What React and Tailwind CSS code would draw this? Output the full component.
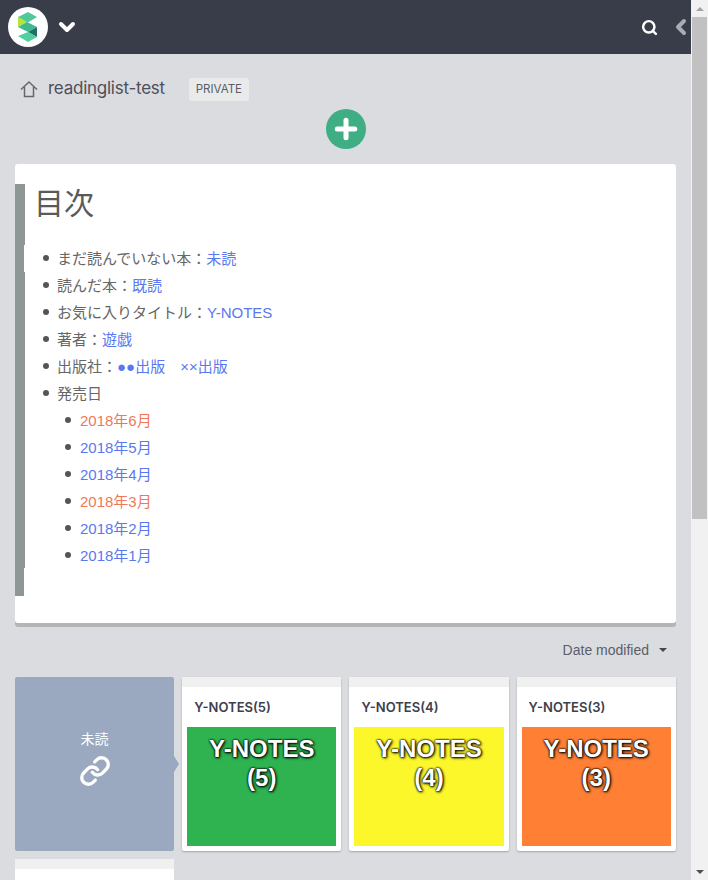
import { Link, Search, ChevronDown, ChevronLeft, Plus } from "lucide-react";

const TOC = [
  { label: "まだ読んでいない本", links: ["未読"] },
  { label: "読んだ本", links: ["既読"] },
  { label: "お気に入りタイトル", links: ["Y-NOTES"] },
  { label: "著者", links: ["遊戯"] },
  { label: "出版社", links: ["●●出版", "××出版"] },
];

const DATES = [
  { label: "2018年6月", missing: true },
  { label: "2018年5月" },
  { label: "2018年4月" },
  { label: "2018年3月", missing: true },
  { label: "2018年2月" },
  { label: "2018年1月" },
];

const NOTES = [
  { n: 5, color: "bg-[#2eb350]" },
  { n: 4, color: "bg-[#fbf72a]" },
  { n: 3, color: "bg-[#ff7f35]" },
];

const Logo = () => (
  <div className="w-10 h-10 rounded-full bg-white">
    <svg width="40" height="40" viewBox="8 7 40 40">
      <polygon points="18,17 28,12 37,17 27,23" fill="#4fc99a" />
      <polygon points="18,17 27,22 18,27" fill="#b5e53a" />
      <polygon points="18,27 27,22 37,27 28,32" fill="#3fb98f" />
      <polygon points="28,32 37,27 37,37" fill="#1f6f6a" />
      <polygon points="18,36 28,32 37,37 28,42" fill="#4fd0a0" />
    </svg>
  </div>
);

const Header = () => (
  <header className="h-[54px] bg-[#393d4a] flex items-center pl-2 -mr-[2px]">
    <Logo />
    <ChevronDown size={24} strokeWidth={4} className="ml-[7px] text-white" />
    <Search size={17} strokeWidth={3.5} className="ml-auto text-white" />
    <ChevronLeft size={24} strokeWidth={4} className="ml-[11px] text-[#a9acb4]" />
  </header>
);

const TitleRow = () => (
  <div className="flex items-center h-[24px] mt-[23px] pl-5">
    <svg width="18" height="18" viewBox="20 80 18 18" fill="none" stroke="#66676e" strokeWidth="1.5">
      <path d="M21 89.5 29 82l8 7.5" />
      <path d="M24.5 87v9.5h9V87" />
    </svg>
    <span className="ml-[10px] -mt-[1px] text-[17px] tracking-[-0.25px] text-[#4d4f59] font-['Inter',sans-serif]">readinglist-test</span>
    <span className="ml-6 h-[23px] w-[60px] pt-[2px] flex items-center justify-center rounded-[3px] bg-[#e9ebeb] text-[11.5px] text-[#5a5c66] font-['Inter',sans-serif]">
      PRIVATE
    </span>
  </div>
);

const TocList = () => (
  <ul className="mt-[22px] pl-[21px] text-[15px] leading-[27px]">
    {TOC.map((row) => (
      <li key={row.label} className="relative before:absolute before:left-[-14px] before:top-[10px] before:w-[6px] before:h-[6px] before:rounded-full before:bg-[#555]">
        {row.label}
        <span className="leading-none font-['Noto_Sans_CJK_TC']">：</span>
        {row.links.map((l, i) => (
          <a key={l} className="text-[#5a78f0]">
            {i > 0 && "　"}
            {l}
          </a>
        ))}
      </li>
    ))}
    <li className="relative before:absolute before:left-[-14px] before:top-[10px] before:w-[6px] before:h-[6px] before:rounded-full before:bg-[#555]">
      発売日
      <ul className="pl-[23px]">
        {DATES.map((d) => (
          <li
            key={d.label}
            className={`relative before:absolute before:left-[-15px] before:top-[10px] before:w-[6px] before:h-[6px] before:rounded-full before:bg-[#555] ${
              d.missing ? "text-[#f0785a]" : "text-[#5a78f0]"
            }`}
          >
            {d.label}
          </li>
        ))}
      </ul>
    </li>
  </ul>
);

const NoteCard = ({ n, color }) => (
  <div className="h-[174px] bg-white rounded-[2px] shadow-[0_1px_2px_rgba(0,0,0,0.25)] flex flex-col">
    <div className="h-[10px] bg-[#f0f0f1]" />
    <div className="h-[40px] pl-[12px] pt-[1px] flex items-center text-[13px] font-semibold text-[#3d404d] font-['Inter',sans-serif]">Y-NOTES({n})</div>
    <div
      className={`mx-[5px] h-[119px] ${color} pt-[7px] text-center text-white font-bold text-[24px] leading-[29px] [text-shadow:0_0_2px_#000,0_0_2px_#000,1px_1px_3px_#000]`}
    >
      Y-NOTES
      <br />({n})
    </div>
  </div>
);

export default function App() {
  return (
    <div className="h-[880px] overflow-hidden flex bg-[#dbdce0] text-[#666] font-['Liberation_Sans','Noto_Sans_CJK_JP',sans-serif]">
      <main className="w-[691px] shrink-0">
        <Header />
        <TitleRow />

        {/* Add button */}
        <div className="mt-[8px] flex justify-center">
          <div className="w-10 h-10 rounded-full bg-[#3fae85] flex items-center justify-center">
            <Plus size={30} strokeWidth={4} className="text-white" />
          </div>
        </div>

        {/* Table of contents */}
        <section className="relative mt-[15px] mx-[15px] h-[459px] pt-[20px] bg-white rounded-[3px] shadow-[0_4px_0_#b5b5b5]">
          <div className="h-[412px] border-l-[10px] border-[#8e9696] pl-[11px]">
            <h1 className="-ml-[2px] text-[30px] leading-[39px] font-normal text-[#5a5a5a]">目次</h1>
            <TocList />
          </div>
          <div className="absolute left-[9px] top-[81px] w-px h-[27px] bg-white" />
          <div className="absolute left-[9px] top-[404px] w-px h-[28px] bg-white" />
        </section>

        {/* Sort */}
        <div className="mt-[20px] h-[14px] flex items-center justify-end pr-[24px] text-[14px] text-[#5c5e68]">
          Date modified
          <span className="ml-[10px] w-0 h-0 border-x-[4px] border-x-transparent border-t-[4px] border-t-[#44464f]" />
        </div>

        {/* Cards */}
        <div className="mt-[20px] ml-[15px] w-[660.8px] grid grid-cols-4 gap-[8px]">
          <div className="relative h-[174px] bg-[#9aa9c0] rounded-[2px] pt-[54px] flex flex-col items-center text-white">
            <span className="text-[14px] leading-[16px]">未読</span>
            <Link size={32} strokeWidth={2.5} className="mt-[8px]" />
            <span className="absolute left-full top-[79px] w-0 h-0 border-y-[8px] border-y-transparent border-l-[5px] border-l-[#9aa9c0]" />
          </div>
          {NOTES.map((note) => (
            <NoteCard key={note.n} {...note} />
          ))}
          <div className="h-[174px] bg-white rounded-[2px]">
            <div className="h-[10px] bg-[#f0f0f1]" />
          </div>
        </div>
      </main>

      {/* Scrollbar */}
      <div className="relative w-[17px] shrink-0 bg-[#f1f1f1] flex flex-col items-center">
        <div className="h-[17px] flex items-center justify-center">
          <span className="w-0 h-0 border-x-[4px] border-x-transparent border-b-[4px] border-b-[#a3a3a3]" />
        </div>
        <div className="w-[15px] h-[502px] bg-[#c1c1c1]" />
        <div className="mt-auto h-[17px] flex items-center justify-center">
          <span className="w-0 h-0 border-x-[4px] border-x-transparent border-t-[4px] border-t-[#505050]" />
        </div>
      </div>
    </div>
  );
}
